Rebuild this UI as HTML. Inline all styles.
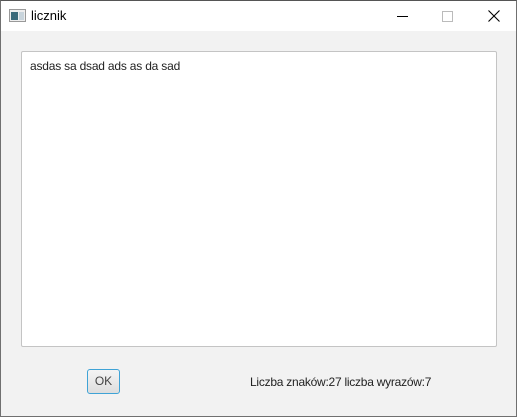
<!DOCTYPE html>
<html><head><style>
body{margin:0;width:517px;height:417px;overflow:hidden;font-family:"Liberation Sans",sans-serif;background:#f2f2f2;position:relative}
.win{position:absolute;left:0;top:0;width:515px;height:415px;border:1px solid #707070;border-top-color:#555;background:#f2f2f2}
.title{position:absolute;left:0;top:0;width:515px;height:30px;background:#fff}
.t{position:absolute;left:30px;top:7px;font-size:13px;color:#000}
.ta{position:absolute;left:20px;top:50px;width:474px;height:294px;background:#fff;border:1px solid #c4c4c4;border-radius:2px}
.ta span{position:absolute;left:8px;top:7px;font-size:12px;color:#222;letter-spacing:-0.2px}
.btn{position:absolute;left:86px;top:368px;width:31px;height:23px;border:1px solid #3fa3d6;border-radius:3px;background:linear-gradient(#f4f4f4,#dedede);font-size:12px;color:#444;text-align:center;line-height:23px}
.lab{position:absolute;left:249px;top:374px;font-size:12px;color:#222;letter-spacing:-0.25px}
</style></head><body>
<div class="win">
<div class="title">
<svg style="position:absolute;left:8px;top:8px" width="17" height="14"><rect x="0.5" y="0.5" width="16" height="12" fill="#eee" stroke="#999"/><rect x="2" y="3" width="7" height="8" fill="#3a6a7a"/><rect x="10" y="3" width="5" height="8" fill="#c8d4dc"/></svg>
<div class="t">licznik</div>
<div style="position:absolute;left:396px;top:15px;width:11px;height:1px;background:#000"></div>
<div style="position:absolute;left:441px;top:10px;width:9px;height:9px;border:1px solid #bbb"></div>
<svg style="position:absolute;left:487px;top:9px" width="12" height="12"><path d="M0.5 0.5L11.5 11.5M11.5 0.5L0.5 11.5" stroke="#000" stroke-width="1.1"/></svg>
</div>
<div class="ta"><span>asdas sa dsad ads as da sad</span></div>
<div class="btn">OK</div>
<div class="lab">Liczba znaków:27 liczba wyrazów:7</div>
</div>
</body></html>
